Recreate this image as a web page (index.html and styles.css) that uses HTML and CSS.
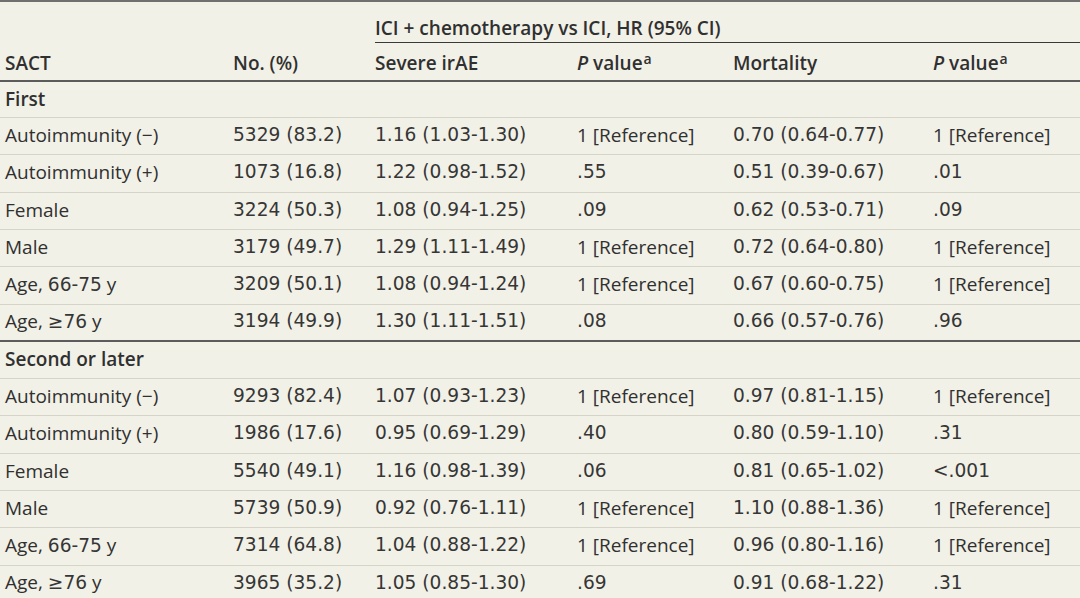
FILE: index.html
```html
<!DOCTYPE html>
<html lang="en">
<head>
<meta charset="utf-8">
<title>SACT table</title>
<link rel="stylesheet" href="styles.css">
</head>
<body>
<div class="tbl">
  <div class="row grp">
    <div class="c grp-cell"><span class="grp-label">ICI + chemotherapy vs ICI, HR (95% CI)</span></div>
  </div>
  <div class="row head">
    <div class="c">SACT</div>
    <div class="c">No. (%)</div>
    <div class="c">Severe irAE</div>
    <div class="c"><span><i>P</i> value<sup>a</sup></span></div>
    <div class="c">Mortality</div>
    <div class="c"><span><i>P</i> value<sup>a</sup></span></div>
  </div>

  <div class="row sec first"><div class="c">First</div></div>
  <div class="row data">
    <div class="c">Autoimmunity (−)</div>
    <div class="c num">5329 (83.2)</div>
    <div class="c num">1.16 (1.03-1.30)</div>
    <div class="c">1 [Reference]</div>
    <div class="c num">0.70 (0.64-0.77)</div>
    <div class="c">1 [Reference]</div>
  </div>
  <div class="row data">
    <div class="c">Autoimmunity (+)</div>
    <div class="c num">1073 (16.8)</div>
    <div class="c num">1.22 (0.98-1.52)</div>
    <div class="c num">.55</div>
    <div class="c num">0.51 (0.39-0.67)</div>
    <div class="c num">.01</div>
  </div>
  <div class="row data">
    <div class="c">Female</div>
    <div class="c num">3224 (50.3)</div>
    <div class="c num">1.08 (0.94-1.25)</div>
    <div class="c num">.09</div>
    <div class="c num">0.62 (0.53-0.71)</div>
    <div class="c num">.09</div>
  </div>
  <div class="row data">
    <div class="c">Male</div>
    <div class="c num">3179 (49.7)</div>
    <div class="c num">1.29 (1.11-1.49)</div>
    <div class="c">1 [Reference]</div>
    <div class="c num">0.72 (0.64-0.80)</div>
    <div class="c">1 [Reference]</div>
  </div>
  <div class="row data">
    <div class="c"><span>Age, <span class="num">66-75</span> y</span></div>
    <div class="c num">3209 (50.1)</div>
    <div class="c num">1.08 (0.94-1.24)</div>
    <div class="c">1 [Reference]</div>
    <div class="c num">0.67 (0.60-0.75)</div>
    <div class="c">1 [Reference]</div>
  </div>
  <div class="row data end">
    <div class="c"><span>Age, <span class="num">≥76</span> y</span></div>
    <div class="c num">3194 (49.9)</div>
    <div class="c num">1.30 (1.11-1.51)</div>
    <div class="c num">.08</div>
    <div class="c num">0.66 (0.57-0.76)</div>
    <div class="c num">.96</div>
  </div>

  <div class="row sec second"><div class="c">Second or later</div></div>
  <div class="row data">
    <div class="c">Autoimmunity (−)</div>
    <div class="c num">9293 (82.4)</div>
    <div class="c num">1.07 (0.93-1.23)</div>
    <div class="c">1 [Reference]</div>
    <div class="c num">0.97 (0.81-1.15)</div>
    <div class="c">1 [Reference]</div>
  </div>
  <div class="row data">
    <div class="c">Autoimmunity (+)</div>
    <div class="c num">1986 (17.6)</div>
    <div class="c num">0.95 (0.69-1.29)</div>
    <div class="c num">.40</div>
    <div class="c num">0.80 (0.59-1.10)</div>
    <div class="c num">.31</div>
  </div>
  <div class="row data">
    <div class="c">Female</div>
    <div class="c num">5540 (49.1)</div>
    <div class="c num">1.16 (0.98-1.39)</div>
    <div class="c num">.06</div>
    <div class="c num">0.81 (0.65-1.02)</div>
    <div class="c num">&lt;.001</div>
  </div>
  <div class="row data">
    <div class="c">Male</div>
    <div class="c num">5739 (50.9)</div>
    <div class="c num">0.92 (0.76-1.11)</div>
    <div class="c">1 [Reference]</div>
    <div class="c num">1.10 (0.88-1.36)</div>
    <div class="c">1 [Reference]</div>
  </div>
  <div class="row data">
    <div class="c"><span>Age, <span class="num">66-75</span> y</span></div>
    <div class="c num">7314 (64.8)</div>
    <div class="c num">1.04 (0.88-1.22)</div>
    <div class="c">1 [Reference]</div>
    <div class="c num">0.96 (0.80-1.16)</div>
    <div class="c">1 [Reference]</div>
  </div>
  <div class="row data">
    <div class="c"><span>Age, <span class="num">≥76</span> y</span></div>
    <div class="c num">3965 (35.2)</div>
    <div class="c num">1.05 (0.85-1.30)</div>
    <div class="c num">.69</div>
    <div class="c num">0.91 (0.68-1.22)</div>
    <div class="c num">.31</div>
  </div>
</div>
</body>
</html>
```

FILE: styles.css
```css
html, body {
  margin: 0;
  padding: 0;
  background: #f2f1e7;
}

body {
  font-family: "Open Sans", "Liberation Sans", sans-serif;
  font-size: 19px;
  color: #303030;
  overflow: hidden;
}

.tbl {
  border-top: 2px solid #707070;
}

.row {
  display: grid;
  grid-template-columns: 228px 142px 202px 156px 200px 1fr;
  box-sizing: border-box;
}

.c {
  display: flex;
  align-items: center;
  padding: 0 0 2px 5px;
  line-height: 24px;
  white-space: nowrap;
}

.num {
  font-family: "DejaVu Sans", "Open Sans", sans-serif;
  font-size: 18.6px;
  color: #363636;
}

/* group header */
.grp {
  height: 41px;
}

.grp-cell {
  grid-column: 3 / -1;
  align-items: flex-end;
  padding: 0 0 0 5px;
  font-weight: 600;
}

.grp-label {
  flex: 1;
  padding-bottom: 3px;
  line-height: 22px;
  border-bottom: 1px solid #3a3a3a;
}

/* column header */
.head {
  height: 39px;
  border-bottom: 2px solid #5c5c5c;
  font-weight: 600;
}

.head .c {
  align-items: flex-end;
  padding-bottom: 5px;
}

.head i {
  font-style: italic;
}

.head sup {
  font-size: 14px;
  line-height: 0;
  vertical-align: 6px;
  font-weight: 600;
  margin-left: 1px;
}

/* section rows */
.sec {
  border-bottom: 1px solid #d6d4c8;
  font-weight: 600;
}

.sec .c {
  grid-column: 1 / -1;
}

.sec.first {
  height: 36px;
}

.sec.second {
  height: 37px;
}

/* data rows */
.data {
  height: 37.33px;
  border-bottom: 1px solid #d6d4c8;
}

.data.end {
  border-bottom: 2px solid #5c5c5c;
}
```
